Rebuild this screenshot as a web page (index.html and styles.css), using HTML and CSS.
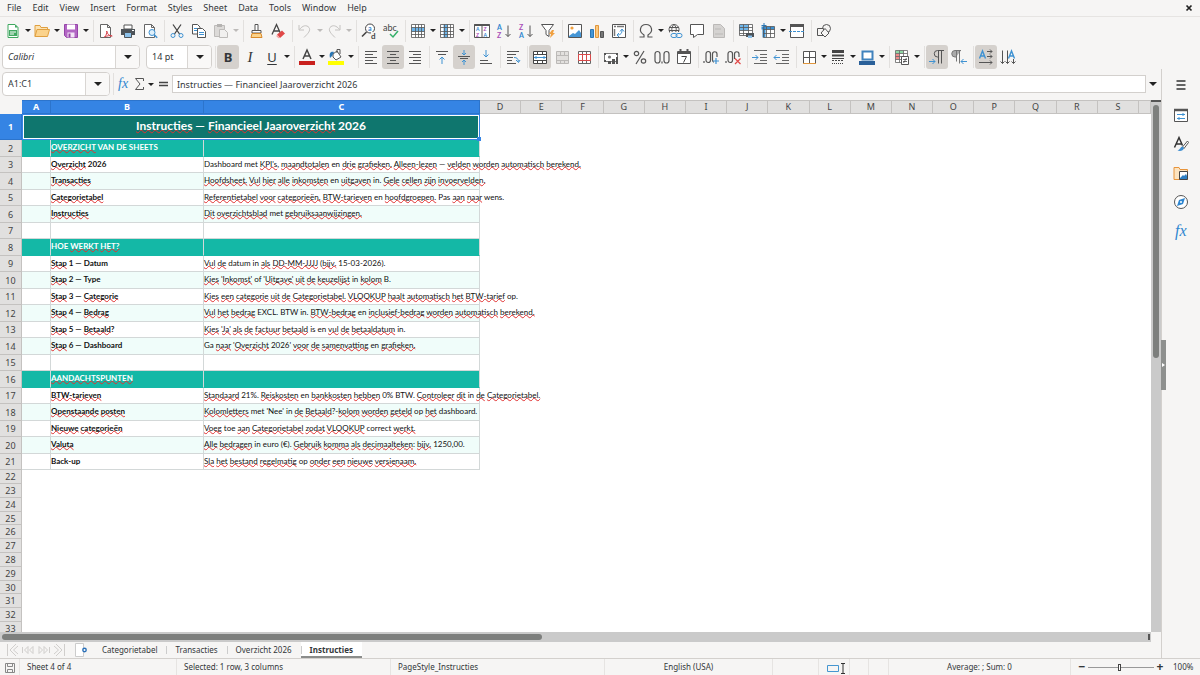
FILE: index.html
```html
<!DOCTYPE html>
<html lang="en">
<head>
<meta charset="utf-8">
<title>Financieel Jaaroverzicht 2026</title>
<link rel="stylesheet" href="styles.css">
</head>
<body>
<nav class="menubar" aria-label="Menu">
<button>File</button><button>Edit</button><button>View</button><button>Insert</button><button>Format</button><button>Styles</button><button>Sheet</button><button>Data</button><button>Tools</button><button>Window</button><button>Help</button>
<button class="close" aria-label="Close"><svg viewBox="0 0 8 8" width="8" height="8"><path d="M1.500 1.500l5 5M6.500 1.500l-5 5" stroke="#222" stroke-width="1.700"/></svg></button>
</nav>

<div class="toolbar" role="toolbar" aria-label="Standard">
<button class="tb" aria-label="New"><svg viewBox="0 0 16 16"><path d="M3 1.500h7l3 3v10H3z" fill="#fff" stroke="#3fa860"/><path d="M10 1.500v3h3z" fill="#3fa860"/><path d="M4 7h8v6H4z" fill="#43a863"/><path d="M5 9h6M5 11h4" stroke="#fff"/></svg></button><button class="dd" aria-label="New options"></button>
<button class="tb" aria-label="Open"><svg viewBox="0 0 16 16"><path d="M1 13.500V2.500h5l1 2h6.500v2" fill="#fce2b0" stroke="#e0a040"/><path d="M1 13.500l2-7h12.500l-2 7z" fill="#fbd38c" stroke="#e0a040"/></svg></button><button class="dd" aria-label="Open options"></button>
<button class="tb" aria-label="Save"><svg viewBox="0 0 16 16"><path d="M1.500 1.500h13v13h-11l-2-2z" fill="#b266c4" stroke="#9544a8"/><path d="M4 1.500h8v5H4z" fill="#fff"/><path d="M4.500 9.500h7v5h-7z" fill="#f3e4f6"/><path d="M5.500 10.500h2v4h-2z" fill="#9544a8"/></svg></button><button class="dd" aria-label="Save options"></button>
<span class="sep"></span>
<button class="tb" aria-label="Export as PDF"><svg viewBox="0 0 16 16"><path d="M2.500 1.500h7l3 3v10h-10zM9.500 1.500v3h3" fill="#fff" stroke="#666"/><path d="M6.500 14c2-2 2.500-4 2.200-6 .8 3.500 2.500 5 5.500 5-2.500-.8-5-.3-7.700 1z" fill="#fff" stroke="#d8404a"/></svg></button>
<button class="tb" aria-label="Print"><svg viewBox="0 0 16 16"><path d="M4 2h8v4H4z" fill="#fff" stroke="#555"/><path d="M1 6h14v6H1z" fill="#4d5358"/><path d="M4.500 9.500h7v5h-7z" fill="#8cc1ea" stroke="#4d5358"/><path d="M12 7.500h2" stroke="#fff"/></svg></button>
<button class="tb" aria-label="Print preview"><svg viewBox="0 0 16 16"><path d="M2.500 1.500h7l3 3v10h-10zM9.500 1.500v3h3" fill="#fff" stroke="#666"/><circle cx="10" cy="9.500" r="3" fill="#dff0fb" stroke="#3f92d2"/><path d="M12.200 11.800l3 3" stroke="#3f92d2" stroke-width="1.500"/></svg></button>
<span class="sep"></span>
<button class="tb" aria-label="Cut"><svg viewBox="0 0 16 16" fill="none"><path d="M4 1.500l6.500 9.500M12 1.500L5.500 11" stroke="#444" stroke-width="1.300"/><circle cx="4" cy="12.500" r="2" stroke="#3f92d2"/><circle cx="12" cy="12.500" r="2" stroke="#3f92d2"/></svg></button>
<button class="tb" aria-label="Copy"><svg viewBox="0 0 16 16"><path d="M1.500 1.500h5l2.500 2.500v7H1.500z" fill="#fff" stroke="#555"/><path d="M3 5.500h4M3 7.500h4" stroke="#3f92d2"/><path d="M6.500 5.500h5l3 3v6h-8z" fill="#fff" stroke="#555"/><path d="M8 9.500h5M8 11.500h5" stroke="#3f92d2"/></svg></button>
<button class="tb" aria-label="Paste"><svg viewBox="0 0 16 16"><path d="M1.500 2.500h10v11h-10z" fill="#dcdad8" stroke="#bdbbb9"/><path d="M4 1h5v3H4z" fill="#b5b3b1"/><path d="M6.500 6.500h5l3 3v5h-8z" fill="#f1f0ef" stroke="#bdbbb9"/></svg></button><button class="dd off" aria-label="Paste options"></button>
<span class="sep"></span>
<button class="tb" aria-label="Clone formatting"><svg viewBox="0 0 16 16"><path d="M7 1.500h3v6H7zM4 7.500h9v2.500H4z" fill="#fff" stroke="#555"/><path d="M4 10.500h9l1 4H3z" fill="#fbd38c" stroke="#d88a2c"/></svg></button>
<button class="tb" aria-label="Clear formatting"><svg viewBox="0 0 16 16"><path d="M2 11.500L6.500 1.500l4 9M4 8h5" fill="none" stroke="#444" stroke-width="1.300"/><path d="M7 11.500l5-4 3 3-5 4.500z" fill="#e04848"/><path d="M7 11.500l3 3.500-1.500.3-2.200-2z" fill="#f4a0a0"/></svg></button>
<span class="sep"></span>
<button class="tb" aria-label="Undo"><svg viewBox="0 0 16 16" fill="none" stroke="#c4c2c0"><path d="M2 2v5h5M2.500 6.500c3-4 7-5 9.500-2 2 3-1 6-5 10"/></svg></button><button class="dd off" aria-label="Undo list"></button>
<button class="tb" aria-label="Redo"><svg viewBox="0 0 16 16" fill="none" stroke="#c4c2c0"><path d="M14 2v5H9M13.500 6.500c-3-4-7-5-9.500-2-2 3 1 6 5 10"/></svg></button><button class="dd off" aria-label="Redo list"></button>
<span class="sep"></span>
<button class="tb" aria-label="Find and replace"><svg viewBox="0 0 16 16" fill="none"><circle cx="9" cy="5.500" r="4.500" fill="#fff" stroke="#444"/><path d="M5.500 9L1 13.500" stroke="#444" stroke-width="1.600"/><text x="7" y="7.500" class="gl blue s7">a</text><path d="M10 9h6v7h-6z" fill="#f6f5f4"/><text x="10" y="15.500" class="gl s8">d</text></svg></button>
<button class="tb" aria-label="Spelling"><svg viewBox="0 0 16 16" fill="none"><text x="0" y="8" class="gl s9">abc</text><path d="M7 11l3 3 5-6" stroke="#35b06a" stroke-width="1.500"/></svg></button>
<span class="sep"></span>
<button class="tb" aria-label="Row"><svg viewBox="0 0 16 16"><path d="M1.500 1.500h13v13h-13z" fill="#fff"/><path d="M1.500 4.500h13v4h-13z" fill="#6db5ea"/><path d="M1.500 1.500h13v13h-13zM1.500 4.500h13M1.500 8.500h13M1.500 11.500h13M5.500 1.500v13M8.500 1.500v13M11.500 1.500v13" fill="none" stroke="#555" stroke-width=".8"/></svg></button><button class="dd" aria-label="Row options"></button>
<button class="tb" aria-label="Column"><svg viewBox="0 0 16 16"><path d="M1.500 1.500h13v13h-13z" fill="#fff"/><path d="M4.500 1.500h4v13h-4z" fill="#6db5ea"/><path d="M1.500 1.500h13v13h-13zM1.500 4.500h13M1.500 8.500h13M1.500 11.500h13M5.500 1.500v13M8.500 1.500v13M11.500 1.500v13" fill="none" stroke="#555" stroke-width=".8"/></svg></button><button class="dd" aria-label="Column options"></button>
<span class="sep"></span>
<button class="tb" aria-label="Sort"><svg viewBox="0 0 16 16"><path d="M.5 1.500h15v13H.5zM8 1.500v13" fill="#fff" stroke="#555"/><path d="M.5 2h15" stroke="#555" stroke-width="2"/><text x="2" y="8" class="gl blue s5">A</text><text x="2" y="14" class="gl purple s5">Z</text><text x="9.500" y="8" class="gl purple s5">Z</text><text x="9.500" y="14" class="gl blue s5">A</text></svg></button>
<button class="tb" aria-label="Sort ascending"><svg viewBox="0 0 16 16"><text x="1" y="6.500" class="gl blue s7">A</text><text x="1" y="15" class="gl purple s7">Z</text><path d="M12 2.500v11M9.500 11l2.500 2.500L14.500 11" fill="none" stroke="#555"/></svg></button>
<button class="tb" aria-label="Sort descending"><svg viewBox="0 0 16 16"><text x="1" y="6.500" class="gl purple s7">Z</text><text x="1" y="15" class="gl blue s7">A</text><path d="M12 2.500v11M9.500 11l2.500 2.500L14.500 11" fill="none" stroke="#555"/></svg></button>
<button class="tb" aria-label="AutoFilter"><svg viewBox="0 0 16 16"><path d="M1.500 1.500h12l-4.500 6v6l-3-2v-4z" fill="#fff" stroke="#555"/><path d="M12 7l-3 4h2l-1 4 5-5h-2l1-3z" fill="#f0a040"/></svg></button>
<span class="sep"></span>
<button class="tb" aria-label="Insert image"><svg viewBox="0 0 16 16"><path d="M1.500 1.500h13v13h-13z" fill="#fff" stroke="#555"/><path d="M2 13l4-3 2 1 4-4 2 3v4H2z" fill="#4596d6"/><circle cx="5" cy="5" r="1.600" fill="#f0a040"/></svg></button>
<button class="tb" aria-label="Insert chart"><svg viewBox="0 0 16 16"><path d="M1.500 6.500h3v8h-3z" fill="#4596d6" stroke="#2b77b5"/><path d="M6.500 2.500h3v12h-3z" fill="#fbc980" stroke="#e0963c"/><path d="M11.500 8.500h3v6h-3z" fill="#777" stroke="#555"/></svg></button>
<button class="tb" aria-label="Insert pivot table"><svg viewBox="0 0 16 16" fill="none"><path d="M1.500 1.500h13v13h-13z" fill="#fff" stroke="#555"/><path d="M3 3.500h2M6 3.500h7M3.500 6v7" stroke="#777" stroke-width="1.500"/><path d="M6 12c4 0 5-2 5-5M9 8.500L11 6l2 2.500M8 10l-2 2 2 2" stroke="#3f92d2"/></svg></button>
<span class="sep"></span>
<button class="tb" aria-label="Special character"><svg viewBox="0 0 16 16" fill="none" stroke="#555"><path d="M1.500 14h4.500v-2C3 10 2 8 2.500 6 3 3 5.500 1.500 8 1.500S13 3 13.500 6c.5 2-.5 4-3.500 6v2h4.500" stroke-width="1.200"/></svg></button><button class="dd" aria-label="Recent characters"></button>
<button class="tb" aria-label="Insert hyperlink"><svg viewBox="0 0 16 16" fill="none"><path d="M7 1.500a5 5 0 1 0 .1 0zM7 1.500c-3 3-3 7 0 10 3-3 3-7 0-10zM2.500 4.500h9M2 7.500h10" stroke="#555"/><path d="M3 9h13v7H3z" fill="#f6f5f4"/><rect x="4" y="10.500" width="6" height="4" rx="2" stroke="#3f92d2"/><rect x="9" y="10.500" width="6" height="4" rx="2" stroke="#3f92d2"/></svg></button>
<button class="tb" aria-label="Insert comment"><svg viewBox="0 0 16 16"><path d="M1.500 1.500h13v10H8.500l-4 3v-3h-3z" fill="#fff" stroke="#555"/></svg></button>
<button class="tb" aria-label="Headers and footers"><svg viewBox="0 0 16 16"><path d="M2.500 1.500h7l4 4v9h-11z" fill="#d5d3d1" stroke="#bbb9b7"/><path d="M4 6h6M4 11h8" stroke="#bbb9b7"/></svg></button>
<span class="sep"></span>
<button class="tb" aria-label="Define print area"><svg viewBox="0 0 16 16"><path d="M1.500 1.500h13v11h-13z" fill="#fff"/><path d="M1.500 1.500h9v6h-9z" fill="#6db5ea"/><path d="M1.500 1.500h13v11h-13zM1.500 4.500h13M1.500 7.500h13M1.500 10.500h13M5.500 1.500v11M10.500 1.500v11" fill="none" stroke="#555" stroke-width=".8"/><path d="M8 10h8v4H8z" fill="#4d5358"/><path d="M10 12.500h4v2.500h-4z" fill="#8cc1ea"/></svg></button>
<button class="tb" aria-label="Freeze rows and columns"><svg viewBox="0 0 16 16"><path d="M3.500 3.500h11v11h-11z" fill="#fff"/><path d="M1.500 3.500h13v3h-13zM2.500 3.500h3v11h-3z" fill="#3a8fd0"/><path d="M3.500 3.500h11v11h-11zM3.500 6.500h11M3.500 10.500h11M6.500 3.500v11M10.500 3.500v11" fill="none" stroke="#555" stroke-width=".8"/><path d="M4 0v6M1.500 2.500h5" stroke="#2b77b5"/></svg></button><button class="dd" aria-label="Freeze options"></button>
<button class="tb" aria-label="Split window"><svg viewBox="0 0 16 16"><path d="M1.500 2.500h13v12h-13z" fill="#fff" stroke="#555"/><path d="M1 2.500h14" stroke="#555" stroke-width="3"/><path d="M0 8.500h16" stroke="#3f92d2" stroke-dasharray="3 1"/></svg></button>
<span class="sep"></span>
<button class="tb" aria-label="Show draw functions"><svg viewBox="0 0 16 16" fill="#f6f5f4" stroke="#555"><circle cx="10.500" cy="5.500" r="4"/><path d="M1.500 5.500h6v7h-6z"/><path d="M9 5.500l4 4.500-4 4-4-4z"/></svg></button>
</div>

<div class="toolbar formatting" role="toolbar" aria-label="Formatting">
<span class="combo font"><select aria-label="Font name"><option>Calibri</option></select></span>
<span class="combo size"><select aria-label="Font size"><option>14 pt</option></select></span>
<span class="sep"></span>
<button class="tb on letter bold" aria-label="Bold">B</button>
<button class="tb letter ital" aria-label="Italic">I</button>
<button class="tb letter under" aria-label="Underline">U</button><button class="dd" aria-label="Underline options"></button>
<span class="sep"></span>
<button class="tb" aria-label="Font color"><svg viewBox="0 0 16 16"><path d="M4 10l4-9 4 9M5.500 7h5" fill="none" stroke="#444" stroke-width="1.500"/><path d="M0 12h16v4H0z" fill="#c9211e"/></svg></button><button class="dd" aria-label="Font colors"></button>
<button class="tb" aria-label="Highlighting"><svg viewBox="0 0 16 16"><path d="M5 5l4-3 4 6-5 3-3-3z" fill="#fff" stroke="#555"/><path d="M9 4V.5h3V5" fill="none" stroke="#555"/><path d="M6 3C2 2 1 5 2 9l2-2z" fill="#2b77b5"/><path d="M0 12h16v4H0z" fill="#ff0"/></svg></button><button class="dd" aria-label="Highlight colors"></button>
<span class="sep"></span>
<button class="tb" aria-label="Align left"><svg viewBox="0 0 16 16" stroke="#555"><path d="M2 2.500h12M2 5.500h8M2 8.500h12M2 11.500h8M2 14.500h12"/></svg></button>
<button class="tb on" aria-label="Center"><svg viewBox="0 0 16 16" stroke="#555"><path d="M2 2.500h12M5 5.500h6M2 8.500h12M5 11.500h6M2 14.500h12"/></svg></button>
<button class="tb" aria-label="Align right"><svg viewBox="0 0 16 16" stroke="#555"><path d="M2 2.500h12M6 5.500h8M2 8.500h12M6 11.500h8M2 14.500h12"/></svg></button>
<span class="sep"></span>
<button class="tb" aria-label="Align top"><svg viewBox="0 0 16 16" fill="none"><path d="M2 2.500h12M4 5.500h8" stroke="#555"/><path d="M8 15V8M5.500 10.500L8 8l2.500 2.500" stroke="#3f92d2"/></svg></button>
<button class="tb on" aria-label="Center vertically"><svg viewBox="0 0 16 16" fill="none"><path d="M2 7.500h12M4 9.500h8" stroke="#555"/><path d="M8 1v5M6 4l2 2 2-2M8 16v-5M6 13l2-2 2 2" stroke="#3f92d2"/></svg></button>
<button class="tb" aria-label="Align bottom"><svg viewBox="0 0 16 16" fill="none"><path d="M2 14.500h12M2 11.500h8" stroke="#555"/><path d="M8 1v7M5.500 5.500L8 8l2.500-2.500" stroke="#3f92d2"/></svg></button>
<span class="sep"></span>
<button class="tb" aria-label="Wrap text"><svg viewBox="0 0 16 16" fill="none"><path d="M2 2.500h12M2 5.500h9M2 8.500h6M2 11.500h5M2 14.500h9" stroke="#555"/><path d="M9 8.500c3 0 4 1 4.500 4M11 11l2.500 2.500L15 11" stroke="#3f92d2"/></svg></button>
<span class="sep"></span>
<button class="tb on" aria-label="Merge and center"><svg viewBox="0 0 16 16"><path d="M1.500 2.500h13v12h-13z" fill="#fff"/><path d="M1.500 2.500h13v12h-13zM1.500 5.500h13M1.500 11.500h13M5.500 2.500v3M10.500 2.500v3M5.500 11.500v3M10.500 11.500v3" fill="none" stroke="#444"/><path d="M2 8.500h12M4 7v3M12 7v3" stroke="#3f92d2"/></svg></button>
<button class="tb" aria-label="Merge cells"><svg viewBox="0 0 16 16" fill="#e2e0de" stroke="#bbb9b7"><path d="M2.500 2.500h12v12h-12zM2.500 6.500h12M2.500 11.500h12M6.500 2.500v4M10.500 2.500v4M6.500 11.500v3M10.500 11.500v3"/></svg></button>
<button class="tb" aria-label="Split cells"><svg viewBox="0 0 16 16"><path d="M2.500 2.500h12v12h-12zM2.500 5.500h12M2.500 11.500h12M6.500 2.500v3M10.500 2.500v3M6.500 11.500v3M10.500 11.500v3" fill="#fff" stroke="#666"/><path d="M2.500 5.500h12v6h-12zM6.500 5.500v6M10.500 5.500v6" fill="#fff" stroke="#d84a4a"/></svg></button>
<span class="sep"></span>
<button class="tb" aria-label="Format as currency"><svg viewBox="0 0 16 16"><path d="M1.500 4.500h13v8h-13z" fill="#fff" stroke="#777"/><path d="M1 4h2v2H1zM13 4h2v2h-2zM1 11h2v2H1z" fill="#555"/><circle cx="6.500" cy="8" r="1.600" fill="#777"/><path d="M5 12h3v3H5zM9 10h3v5H9zM13 8h2v7h-2z" fill="#555"/></svg></button><button class="dd" aria-label="Currency options"></button>
<button class="tb" aria-label="Format as percent"><svg viewBox="0 0 16 16" fill="none" stroke="#555" stroke-width="1.200"><circle cx="4.500" cy="4.500" r="2.200"/><circle cx="11.500" cy="12" r="2.200"/><path d="M12 2L4 15"/></svg></button>
<button class="tb" aria-label="Format as number"><svg viewBox="0 0 16 16" fill="none" stroke="#555" stroke-width="1.200"><rect x="1" y="2.500" width="5" height="11.500" rx="2.500"/><rect x="10" y="2.500" width="5" height="11.500" rx="2.500"/><path d="M8 12.500v2"/></svg></button>
<button class="tb" aria-label="Format as date"><svg viewBox="0 0 16 16"><path d="M1.500 2.500h13v12h-13z" fill="#fff" stroke="#555"/><path d="M1 4h14M4.500 0v4M11.500 0v4" stroke="#555" stroke-width="2"/><path d="M5.500 7.500h5l-3 6" fill="none" stroke="#444"/></svg></button>
<span class="sep"></span>
<button class="tb" aria-label="Add decimal place"><svg viewBox="0 0 16 16" fill="none" stroke="#555" stroke-width="1.200"><path d="M1 12v2"/><rect x="3" y="2.500" width="4.500" height="11" rx="2.200"/><path d="M14 8V5c0-3-4.500-3-4.500 0v6c0 1 .5 2 1.500 2.300"/><path d="M13 9v6M10 12h6" stroke="#3f92d2"/></svg></button>
<button class="tb" aria-label="Delete decimal place"><svg viewBox="0 0 16 16" fill="none" stroke="#555" stroke-width="1.200"><path d="M1 12v2"/><rect x="3" y="2.500" width="4.500" height="11" rx="2.200"/><path d="M14 8V5c0-3-4.500-3-4.500 0v5"/><path d="M10 9.500l5.500 5.500M15.500 9.500L10 15" stroke="#e04848"/></svg></button>
<span class="sep"></span>
<button class="tb" aria-label="Increase indent"><svg viewBox="0 0 16 16" fill="none"><path d="M2 1.500h13M8 5.500h7M8 8.500h7M8 11.500h7M2 14.500h13" stroke="#666"/><path d="M0 8.500h6M3.500 6L6 8.500 3.500 11" stroke="#3f92d2"/></svg></button>
<button class="tb" aria-label="Decrease indent"><svg viewBox="0 0 16 16" fill="none"><path d="M2 1.500h13M8 5.500h7M8 8.500h7M8 11.500h7M2 14.500h13" stroke="#666"/><path d="M6 8.500H0M2.500 6L0 8.500 2.500 11" stroke="#3f92d2"/></svg></button>
<span class="sep"></span>
<button class="tb" aria-label="Borders"><svg viewBox="0 0 16 16"><path d="M2.500 2.500h12v12h-12zM8.500 2.500v12M2.500 8.500h12" fill="#fff" stroke="#555"/><path d="M2 14.500h13" stroke="#e0963c"/></svg></button><button class="dd" aria-label="Border options"></button>
<button class="tb" aria-label="Border style"><svg viewBox="0 0 16 16" stroke="#444"><path d="M2 2.500h12" stroke-width="3"/><path d="M2 6.500h12" stroke-width="2"/><path d="M2 9.500h12"/><path d="M2 11.500h12" stroke-dasharray="2 1"/><path d="M2 14.500h12" stroke-dasharray="1 1"/></svg></button><button class="dd" aria-label="Border styles"></button>
<button class="tb" aria-label="Border color"><svg viewBox="0 0 16 16"><path d="M3.500 2.500h10v8h-10z" fill="#fff" stroke="#3f82bd" stroke-width="2"/><path d="M0 12h16v4H0z" fill="#2a6099"/></svg></button><button class="dd" aria-label="Border colors"></button>
<span class="sep"></span>
<button class="tb" aria-label="Conditional formatting"><svg viewBox="0 0 16 16"><path d="M1.500 1.500h12v12h-12z" fill="#fff"/><path d="M1.500 1.500h8v3h-8z" fill="#8fd6a4"/><path d="M1.500 4.500h4v6h-4z" fill="#f08a8a"/><path d="M1.500 1.500h12v12h-12zM1.500 4.500h12M1.500 7.500h12M1.500 10.500h12M5.500 1.500v12M9.500 1.500v12" fill="none" stroke="#666" stroke-width=".8"/><path d="M7.500 7.500h7v8h-7z" fill="#fff" stroke="#555"/><path d="M9 10.500h4M9 12.500h4M12.500 9l-3 5" stroke="#444" stroke-width=".8"/></svg></button><button class="dd" aria-label="Conditional options"></button>
<span class="sep"></span>
<button class="tb on" aria-label="Left-to-right"><svg viewBox="0 0 16 16" fill="none"><path d="M15 1.500H8.500a3 3 0 0 0 0 6.500H9M9.500 1.500v13M12.500 1.500v13" stroke="#555"/><path d="M0 12.500h6M3.500 10L6 12.500 3.500 15" stroke="#3f92d2"/></svg></button>
<button class="tb" aria-label="Right-to-left"><svg viewBox="0 0 16 16" fill="none"><path d="M10 1.500H4a3 3 0 0 0 0 6.500h1z" fill="#aaa"/><path d="M10 1.500H4a3 3 0 0 0 0 6.500h1M5.500 1.500v11M8.500 1.500v13" stroke="#777"/><path d="M16 12.500h-6M12.500 10L10 12.500l2.500 2.500" stroke="#3f92d2"/></svg></button>
<span class="sep"></span>
<button class="tb on" aria-label="Text direction left to right"><svg viewBox="0 0 16 16" fill="none"><path d="M1.500 9.500L4.500 2l3 7.500M2.500 7h4" stroke="#3f92d2" stroke-width="1.400"/><path d="M9 2.500h5M9 7.500h5M1 13.500h13M12 .5l2 2-2 2M12 5.500l2 2-2 2M12 11.500l2 2-2 2" stroke="#555"/></svg></button>
<button class="tb" aria-label="Text direction top to bottom"><svg viewBox="0 0 16 16" fill="none"><path d="M8.500 9.500l3-7.500 3 7.500M9.500 7h4" stroke="#3f92d2" stroke-width="1.400"/><path d="M2.500 1.500v13M7.500 1.500v13M.5 12.500l2 2 2-2M5.500 12.500l2 2 2-2M13.500 10v4.500M11.500 12.500l2 2 2-2" stroke="#555"/></svg></button>
</div>

<div class="workspace">
<main class="document">
<div class="formulabar">
<span class="combo namebox"><select aria-label="Name box"><option>A1:C1</option></select></span>
<span class="sep"></span>
<button class="tb" aria-label="Function wizard"><svg viewBox="0 0 16 16"><text x="2" y="12" class="fx">fx</text></svg></button>
<button class="tb sum" aria-label="Select function"><svg viewBox="0 0 16 16"><path d="M11.500 5V2.500h-8L8 8l-4.500 5.500h8V11" fill="none" stroke="#555"/></svg></button><button class="dd" aria-label="Functions"></button>
<button class="tb" aria-label="Formula"><svg viewBox="0 0 16 16"><path d="M4 6.500h9M4 9.500h9" stroke="#444" stroke-width="1.500"/></svg></button>
<input class="formula" type="text" aria-label="Input line" value="Instructies — Financieel Jaaroverzicht 2026">
<button class="dd expand" aria-label="Expand formula bar"></button>
</div>
<div class="sheetarea">
<div class="cells">
<table class="grid">
<colgroup><col class="cr"><col class="ca"><col class="cb"><col class="cc"><col span="16"><col class="cz"></colgroup>
<thead><tr><th class="corner"></th><th class="sel">A</th><th class="sel">B</th><th class="sel">C</th><th>D</th><th>E</th><th>F</th><th>G</th><th>H</th><th>I</th><th>J</th><th>K</th><th>L</th><th>M</th><th>N</th><th>O</th><th>P</th><th>Q</th><th>R</th><th>S</th><th></th></tr></thead>
<tbody>
<tr class="title"><th class="sel">1</th><td colspan="3"><div class="merged"><u>Instructies</u> — <u>Financieel</u> <u>Jaaroverzicht</u> 2026<i class="handle"></i></div></td><td colspan="17"></td></tr>
<tr class="head"><th>2</th><td></td><td><u>OVERZICHT</u> VAN DE SHEETS</td><td></td><td colspan="17"></td></tr>
<tr class="data"><th>3</th><td></td><td><u>Overzicht</u> 2026</td><td>Dashboard met <u>KPI's</u>, <u>maandtotalen</u> en <u>drie</u> <u>grafieken.</u> <u>Alleen-lezen</u> — <u>velden</u> <u>worden</u> <u>automatisch</u> <u>berekend.</u></td><td colspan="17"></td></tr>
<tr class="data tint"><th>4</th><td></td><td><u>Transacties</u></td><td><u>Hoofdsheet.</u> <u>Vul</u> <u>hier</u> <u>alle</u> <u>inkomsten</u> en <u>uitgaven</u> in. <u>Gele</u> <u>cellen</u> <u>zijn</u> <u>invoervelden.</u></td><td colspan="17"></td></tr>
<tr class="data"><th>5</th><td></td><td><u>Categorietabel</u></td><td><u>Referentietabel</u> <u>voor</u> <u>categorieën,</u> <u>BTW-tarieven</u> en <u>hoofdgroepen.</u> Pas <u>aan</u> <u>naar</u> wens.</td><td colspan="17"></td></tr>
<tr class="data tint"><th>6</th><td></td><td><u>Instructies</u></td><td><u>Dit</u> <u>overzichtsblad</u> met <u>gebruiksaanwijzingen.</u></td><td colspan="17"></td></tr>
<tr class="data"><th>7</th><td></td><td></td><td></td><td colspan="17"></td></tr>
<tr class="head"><th>8</th><td></td><td>HOE <u>WERKT</u> <u>HET?</u></td><td></td><td colspan="17"></td></tr>
<tr class="data"><th>9</th><td></td><td><u>Stap</u> 1 — Datum</td><td><u>Vul</u> <u>de</u> datum in <u>als</u> <u>DD-MM-JJJJ</u> (<u>bijv.</u> 15-03-2026).</td><td colspan="17"></td></tr>
<tr class="data tint"><th>10</th><td></td><td><u>Stap</u> 2 — Type</td><td><u>Kies</u> '<u>Inkomst'</u> of '<u>Uitgave'</u> <u>uit</u> <u>de</u> <u>keuzelijst</u> in <u>kolom</u> B.</td><td colspan="17"></td></tr>
<tr class="data"><th>11</th><td></td><td><u>Stap</u> 3 — <u>Categorie</u></td><td><u>Kies</u> <u>een</u> <u>categorie</u> <u>uit</u> <u>de</u> <u>Categorietabel.</u> <u>VLOOKUP</u> <u>haalt</u> <u>automatisch</u> <u>het</u> <u>BTW-tarief</u> op.</td><td colspan="17"></td></tr>
<tr class="data tint"><th>12</th><td></td><td><u>Stap</u> 4 — <u>Bedrag</u></td><td><u>Vul</u> <u>het</u> <u>bedrag</u> EXCL. BTW in. <u>BTW-bedrag</u> en <u>inclusief-bedrag</u> <u>worden</u> <u>automatisch</u> <u>berekend.</u></td><td colspan="17"></td></tr>
<tr class="data"><th>13</th><td></td><td><u>Stap</u> 5 — <u>Betaald</u>?</td><td><u>Kies</u> '<u>Ja'</u> <u>als</u> <u>de</u> <u>factuur</u> <u>betaald</u> is en <u>vul</u> <u>de</u> <u>betaaldatum</u> in.</td><td colspan="17"></td></tr>
<tr class="data tint"><th>14</th><td></td><td><u>Stap</u> 6 — Dashboard</td><td>Ga <u>naar</u> '<u>Overzicht</u> 2026' <u>voor</u> <u>de</u> <u>samenvatting</u> en <u>grafieken.</u></td><td colspan="17"></td></tr>
<tr class="data"><th>15</th><td></td><td></td><td></td><td colspan="17"></td></tr>
<tr class="head"><th>16</th><td></td><td><u>AANDACHTSPUNTEN</u></td><td></td><td colspan="17"></td></tr>
<tr class="data"><th>17</th><td></td><td><u>BTW-tarieven</u></td><td><u>Standaard</u> 21%. <u>Reiskosten</u> en <u>bankkosten</u> <u>hebben</u> 0% BTW. <u>Controleer</u> <u>dit</u> in <u>de</u> <u>Categorietabel.</u></td><td colspan="17"></td></tr>
<tr class="data tint"><th>18</th><td></td><td><u>Openstaande</u> <u>posten</u></td><td><u>Kolomletters</u> met 'Nee' in <u>de</u> <u>Betaald</u>?-<u>kolom</u> <u>worden</u> <u>geteld</u> op <u>het</u> dashboard.</td><td colspan="17"></td></tr>
<tr class="data"><th>19</th><td></td><td><u>Nieuwe</u> <u>categorieën</u></td><td><u>Voeg</u> toe <u>aan</u> <u>Categorietabel</u> <u>zodat</u> <u>VLOOKUP</u> correct <u>werkt.</u></td><td colspan="17"></td></tr>
<tr class="data tint"><th>20</th><td></td><td><u>Valuta</u></td><td><u>Alle</u> <u>bedragen</u> in euro (€). <u>Gebruik</u> <u>komma</u> <u>als</u> <u>decimaalteken</u>: <u>bijv.</u> 1250,00.</td><td colspan="17"></td></tr>
<tr class="data"><th>21</th><td></td><td>Back-up</td><td><u>Sla</u> <u>het</u> <u>bestand</u> <u>regelmatig</u> op <u>onder</u> <u>een</u> <u>nieuwe</u> <u>versienaam.</u></td><td colspan="17"></td></tr>
<tr class="blank"><th>22</th><td colspan="20"></td></tr>
<tr class="blank"><th>23</th><td colspan="20"></td></tr>
<tr class="blank"><th>24</th><td colspan="20"></td></tr>
<tr class="blank"><th>25</th><td colspan="20"></td></tr>
<tr class="blank"><th>26</th><td colspan="20"></td></tr>
<tr class="blank"><th>27</th><td colspan="20"></td></tr>
<tr class="blank"><th>28</th><td colspan="20"></td></tr>
<tr class="blank"><th>29</th><td colspan="20"></td></tr>
<tr class="blank"><th>30</th><td colspan="20"></td></tr>
<tr class="blank"><th>31</th><td colspan="20"></td></tr>
<tr class="blank"><th>32</th><td colspan="20"></td></tr>
<tr class="blank"><th>33</th><td colspan="20"></td></tr>
</tbody>
</table>
</div>
<div class="vscroll"><span class="vthumb"></span></div>
</div>
<div class="hscroll"><span class="hthumb"></span><span class="hgrip"></span></div>
<div class="tabs">
<button class="nav" aria-label="First sheet"><svg viewBox="0 0 14 14"><path d="M1.500 1v12M10 1L4 7l6 6M12 3L7.500 7l4.500 4"/></svg></button>
<button class="nav" aria-label="Previous sheet"><svg viewBox="0 0 14 14"><path d="M1.500 4v6M7 3.500L3.500 7 7 10.500zM12 3.500L8.500 7l3.500 3.500z"/></svg></button>
<button class="nav flip" aria-label="Next sheet"><svg viewBox="0 0 14 14"><path d="M1.500 4v6M7 3.500L3.500 7 7 10.500zM12 3.500L8.500 7l3.500 3.500z"/></svg></button>
<button class="nav flip" aria-label="Last sheet"><svg viewBox="0 0 14 14"><path d="M1.500 1v12M10 1L4 7l6 6M12 3L7.500 7l4.500 4"/></svg></button>
<button class="add" aria-label="Add sheet"><svg viewBox="0 0 14 14" width="14" height="14"><path d="M1.500.5h8v13h-8z" fill="#fff" stroke="#ccc"/><circle cx="10.500" cy="7" r="1.700" fill="#fff" stroke="#2a70b8" stroke-width="1.400"/></svg></button>
<button class="tab">Categorietabel</button><button class="tab">Transacties</button><button class="tab">Overzicht 2026</button><button class="tab active">Instructies</button>
</div>
</main>
<aside class="sidebar">
<button aria-label="Sidebar settings"><svg viewBox="0 0 16 16"><path d="M3.500 4h9M3.500 8h9M3.500 12h9" stroke="#333" stroke-width="1.500"/></svg></button>
<button aria-label="Properties"><svg viewBox="0 0 16 16"><path d="M1.500 2.500h13v12h-13z" fill="#fff" stroke="#555"/><path d="M1 3h14" stroke="#555" stroke-width="2.500"/><path d="M4 7.500h8M4 11.500h8M10 6v3M6 10v3" stroke="#3f92d2"/></svg></button>
<button aria-label="Styles"><svg viewBox="0 0 16 16"><path d="M1.500 11.500L6 1.500l3.500 8M3 8h5.500" fill="none" stroke="#333" stroke-width="1.500"/><path d="M14.500 5l-5 6 1.500 1.500 4.500-6z" fill="#fff" stroke="#555"/><path d="M9.500 10.500c-2 0-2 3-5 4 3 1 6 0 6.500-2.500z" fill="#3f8ed0"/></svg></button>
<button aria-label="Gallery"><svg viewBox="0 0 16 16"><path d="M1 14.500V2.500h5l1 2h7.500v10z" fill="#fbe3c0" stroke="#e8943a"/><path d="M6.500 6.500h8v8h-8z" fill="#fff" stroke="#444"/><path d="M7 13l3-3 1 1 2-2 1 2v3H7z" fill="#2f7fc4"/></svg></button>
<button aria-label="Navigator"><svg viewBox="0 0 16 16"><circle cx="8" cy="8" r="6.500" fill="#fff" stroke="#555"/><path d="M12 4l-2 6-6 2 2-6z" fill="#2f86d0"/><circle cx="8" cy="8" r="1" fill="#fff"/></svg></button>
<button aria-label="Functions"><svg viewBox="0 0 16 16"><text x="2" y="13" class="fx big">fx</text></svg></button>
<span class="collapse"></span>
</aside>
</div>

<footer class="status">
<span class="mid"><svg viewBox="0 0 12 12" width="12" height="12" fill="none" stroke="#888"><path d="M1.500 1.500h9v9h-9zM3.500 1.500v3h5v-3M3.500 10.500v-3h5v3"/></svg></span>
<span>Sheet 4 of 4</span>
<span>Selected: 1 row, 3 columns</span>
<span>PageStyle_Instructies</span>
<span class="mid">English (USA)</span>
<span></span>
<span class="mode"><svg viewBox="0 0 24 14" width="24" height="14" fill="none"><path d="M1.500 4.500h11v6h-11z" stroke="#4596d0"/><path d="M15 2.500h4M15 12.500h4M17 2.500v10" stroke="#333"/></svg></span>
<span></span><span></span>
<span class="mid">Average: ; Sum: 0</span>
<span class="zoom"><button aria-label="Zoom out">−</button><input type="range" min="0" max="100" value="47" aria-label="Zoom"><button aria-label="Zoom in">+</button><output>100%</output></span>
</footer>
</body>
</html>
```
FILE: styles.css
```css
* { box-sizing: border-box; }
html, body { height: 100%; }
body {
  margin: 0;
  display: flex;
  flex-direction: column;
  overflow: hidden;
  background: #f6f5f4;
  color: #33373a;
  font: 8px/12px "Noto Sans", sans-serif;
}
button, select, input { font: inherit; color: inherit; }
button { border: 0; padding: 0; margin: 0; background: none; }

.menubar {
  display: flex;
  align-items: center;
  gap: 11px;
  height: 17px;
  flex: none;
  padding: 0 7px;
  border-bottom: 1px solid #e6e4e2;
  font-size: 9px;
}
.menubar .close { margin-left: auto; display: flex; }

.toolbar { display: flex; align-items: center; height: 27px; flex: none; padding-left: 2px; }
.toolbar.formatting { height: 25px; }
.tb {
  width: 22px;
  height: 24px;
  flex: none;
  display: flex;
  align-items: center;
  justify-content: center;
  border-radius: 3px;
}
.tb svg { width: 16px; height: 16px; display: block; overflow: visible; }
.tb.on { background: #d5d1cd; }
.dd { width: 7px; height: 20px; flex: none; display: flex; align-items: center; justify-content: center; }
.dd::before {
  content: "";
  flex: none;
  border: 3px solid transparent;
  border-top-color: #222;
  border-bottom-width: 0;
}
.dd.off::before { border-top-color: #bdbbb9; }
.sep { width: 4px; height: 22px; flex: none; border-right: 1px solid #e2e0de; margin-right: 1px; }
.dd + .sep { width: 5px; }
.letter { font-size: 13px; line-height: 16px; }
.bold { font-weight: 700; }
.ital { font-family: "Liberation Serif", serif; font-style: italic; font-size: 15px; }
.under { text-decoration: underline; text-underline-offset: 2px; }
.gl { font-family: Lato, sans-serif; fill: #444; }
.gl.blue { fill: #2f86d0; }
.gl.purple { fill: #a94fb8; }
.s5 { font-size: 5px; font-weight: 700; }
.s7 { font-size: 7px; font-weight: 700; }
.s8 { font-size: 8px; font-weight: 700; }
.s9 { font-size: 9px; }
.fx { font: italic 14px "Liberation Serif", serif; fill: #2f86d0; }
.fx.big { font-size: 16px; }

.combo {
  display: flex;
  position: relative;
  height: 24px;
  flex: none;
  border: 1px solid #d3d0cd;
  border-radius: 4px;
  background: #fff;
}
.combo select {
  appearance: none;
  width: 100%;
  border: 0;
  padding: 0 5px;
  background: transparent;
  font-size: 9px;
}
.combo::after {
  content: "";
  position: absolute;
  inset: 0 0 0 auto;
  width: 23px;
  border-left: 1px solid #d9d6d3;
  border-radius: 0 3px 3px 0;
  background: #f9f8f7;
  pointer-events: none;
}
.combo::before {
  content: "";
  position: absolute;
  right: 7px;
  top: 9px;
  z-index: 1;
  border: 4px solid transparent;
  border-top-color: #222;
  border-bottom-width: 0;
  pointer-events: none;
}
.combo.font { width: 138px; font-style: italic; margin-right: 6px; }
.combo.size { width: 66px; }

.workspace { flex: 1; display: flex; min-height: 0; }
.document { flex: 1; display: flex; flex-direction: column; min-width: 0; }
.formulabar { display: flex; align-items: center; height: 31px; flex: none; padding: 0 5px 1px 2px; }
.namebox { width: 108px; }
.formulabar .tb { width: 18px; }
.formulabar .tb.sum { width: 14px; }
.formula {
  flex: 1;
  height: 18px;
  margin-right: 3px;
  padding: 0 4px;
  border: 1px solid #d3d0cd;
  background: #fff;
  font-size: 9px;
}
.expand::before { border-width: 4px 4px 0; }

.sheetarea { flex: 1; display: flex; min-height: 0; }
.cells { flex: 1; min-width: 0; overflow: hidden; background: #fff; }
.grid { width: 100%; table-layout: fixed; border-collapse: separate; border-spacing: 0; }
.cr { width: 22px; }
.ca { width: 29px; }
.cb { width: 153px; }
.cc { width: 276px; }
.cz { width: 12px; }
.grid th, .grid td { padding: 0; line-height: 10px; white-space: nowrap; }
.grid th {
  border-right: 1px solid #c4c2c0;
  border-bottom: 1px solid #c4c2c0;
  background: #e1e0df;
  color: #444;
  font-size: 9px;
  font-weight: 400;
}
.grid tbody th { padding-top: 1px; }
.grid thead th { height: 14px; border-top: 1px solid #c4c2c0; }
.grid thead th.corner { background: #f6f5f4; border-color: #f6f5f4; }
.grid th.sel { background: #3584e4; border-color: #2c74cc; color: #fff; font-weight: 700; }
.grid td { font-family: Lato, Carlito, sans-serif; font-size: 8px; color: #111; }
.grid u { text-decoration: underline wavy #e03030 1px; text-decoration-skip-ink: none; text-underline-offset: -1px; }
.title { height: 26px; }
.title .merged {
  position: relative;
  height: 26px;
  border: 1px solid #3584e4;
  outline: 1px solid #fff;
  outline-offset: -2px;
  background: #0f766e;
  color: #fff;
  font-size: 12px;
  font-weight: 700;
  line-height: 22px;
  text-align: center;
}
.handle { position: absolute; right: -2px; bottom: -2px; width: 4px; height: 4px; background: #3584e4; }
.head, .data { height: 17px; }
.head:nth-child(odd), .data:nth-child(odd) { height: 16px; }
.head td:nth-child(-n+4), .data td:nth-child(-n+4) {
  padding-bottom: 2px;
  border-right: 1px solid #d3d8d8;
  border-bottom: 1px solid #d3d8d8;
}
.head td:nth-child(-n+4) { background: #14b8a6; border-bottom-color: #14b8a6; color: #fff; font-weight: 700; }
.tint td:nth-child(-n+4) { background: #f0fdfa; }
.data td:nth-child(3) { font-weight: 700; }
.blank { height: 14px; }
.blank:nth-child(5n) { height: 13px; }

.vscroll { width: 10px; flex: none; padding: 3px 2px 0; background: #cacaca; border-top: 2px solid #555; }
.vthumb { display: block; height: 48%; border-radius: 3px; background: #7d7f7d; }
.hscroll { display: flex; align-items: center; justify-content: space-between; height: 10px; flex: none; margin-right: 10px; padding: 0 1px 0 2px; background: #cacaca; }
.hthumb { width: 47%; height: 6px; border-radius: 3px; background: #7d7f7d; }
.hgrip { width: 2px; height: 6px; background: #555; }
.tabs { display: flex; align-items: stretch; height: 16px; flex: none; padding-left: 6px; }
.nav { width: 15px; display: flex; align-items: center; }
.nav svg { width: 14px; height: 14px; fill: none; stroke: #d0cecc; }
.flip { transform: scaleX(-1); }
.add { width: 27px; padding-left: 8px; display: flex; align-items: center; }
.tab { padding: 0 9px 1px; position: relative; }
.tab + .tab::before { content: ""; position: absolute; left: 0; top: 4px; height: 8px; border-left: 1px solid #ccc; }
.tab.active { background: #fff; border-bottom: 2px solid #8b8d8b; font-weight: 700; padding: 1px 9px 0; }

.sidebar {
  position: relative;
  width: 39px;
  flex: none;
  display: flex;
  flex-direction: column;
  align-items: center;
  gap: 13px;
  padding-top: 8px;
  border-left: 1px solid #d3d0cd;
}
.sidebar button { width: 16px; height: 16px; flex: none; }
.sidebar button:first-child { margin-bottom: 1px; }
.sidebar svg { display: block; width: 16px; height: 16px; overflow: visible; }
.collapse { position: absolute; left: -1px; top: 46%; width: 5px; height: 50px; background: #8e908e; }
.collapse::before { content: ""; position: absolute; left: 1px; top: 23px; border: 2px solid transparent; border-left: 3px solid #fff; border-right: 0; }

.status {
  display: grid;
  grid-template-columns: 20px 157px 1fr 1fr 168px 46px 31px 19px 20px 182px 129px;
  height: 17px;
  flex: none;
  border-top: 1px solid #d3d0cd;
  line-height: 16px;
}
.status > span { padding-left: 7px; white-space: nowrap; border-right: 1px solid #e6e4e2; }
.status > span:last-child { border-right: 0; }
.status .mid { padding: 0; text-align: center; }
.status .mid svg, .mode svg { vertical-align: middle; }
.status .zoom { display: flex; align-items: center; gap: 2px; }
.zoom button { font-size: 12px; font-weight: 700; width: 8px; line-height: 12px; }
.zoom output { margin-left: 7px; }
.zoom input { appearance: none; width: 66px; height: 10px; margin: 0; background: linear-gradient(#999, #999) center / 100% 1px no-repeat; }
.zoom input::-webkit-slider-thumb { appearance: none; width: 3px; height: 7px; border: 1px solid #444; background: #fff; }
```
